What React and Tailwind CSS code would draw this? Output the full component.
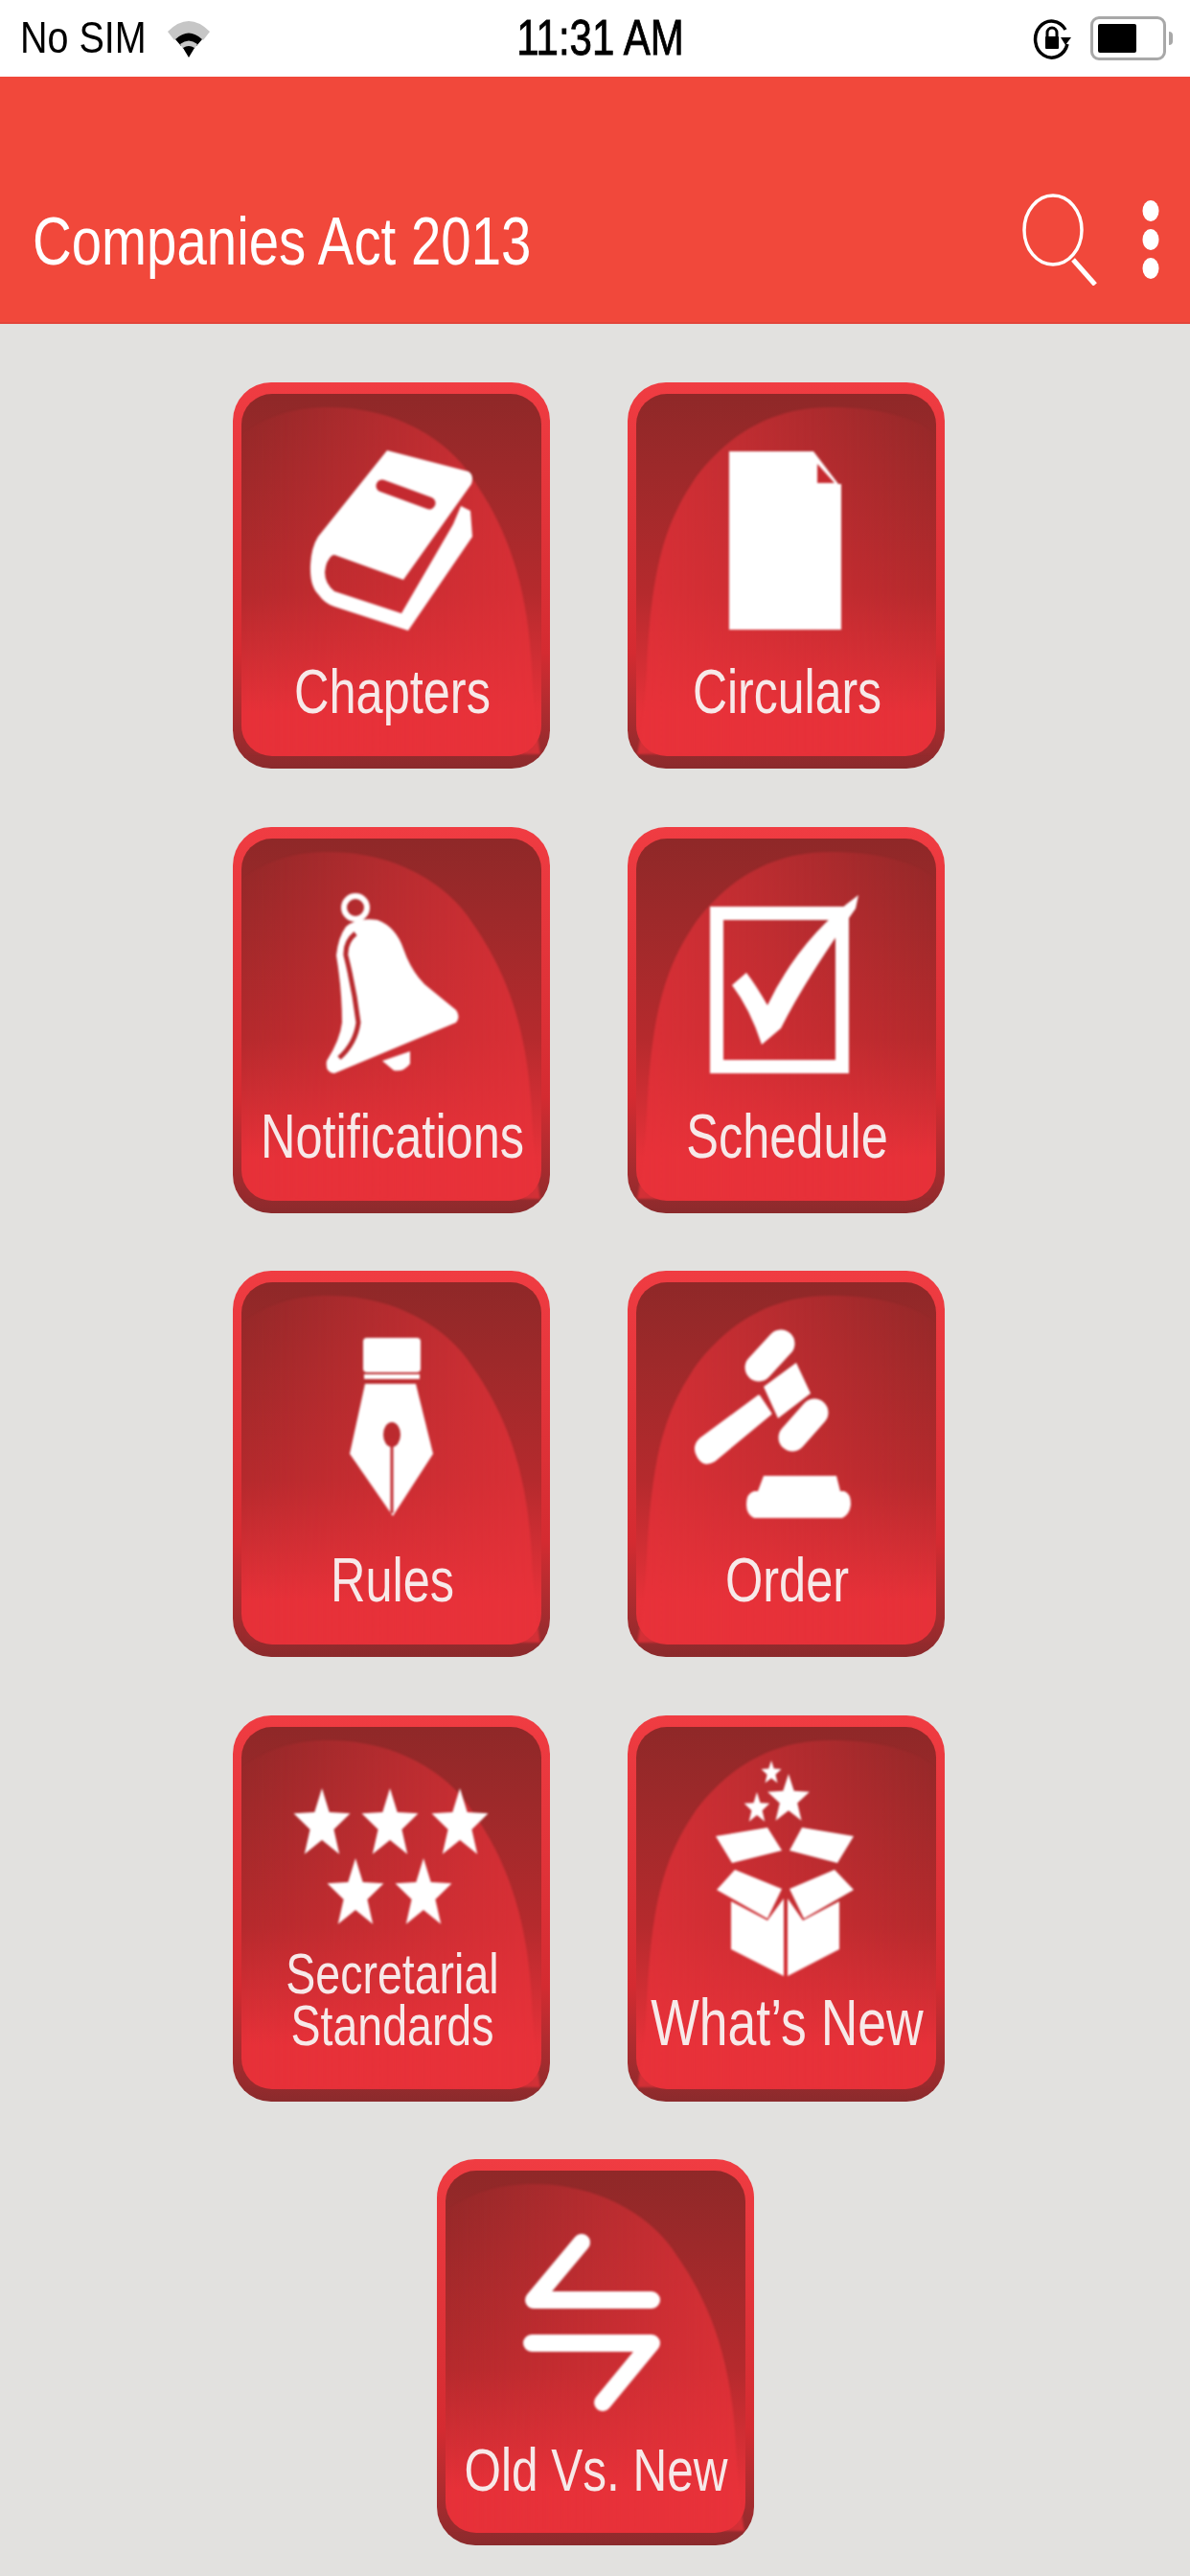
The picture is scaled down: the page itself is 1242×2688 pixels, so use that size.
import React from 'react';

const sans = { fontFamily: '"Liberation Sans", Arial, sans-serif' };

// five point star, stretched a bit taller than wide like the rest of the art
const starPoints = (cx, cy, rx, ry) => {
  const pts = [];
  for (let i = 0; i < 10; i++) {
    const a = -Math.PI / 2 + (i * Math.PI) / 5;
    const k = i % 2 === 0 ? 1 : 0.42;
    pts.push(`${(cx + Math.cos(a) * rx * k).toFixed(1)},${(cy + Math.sin(a) * ry * k).toFixed(1)}`);
  }
  return pts.join(' ');
};

const BookIcon = () => (
  <g fill="#fff">
    <path d="M161 71 L246 93 Q252 97 249 106 L178 206 L106 180 L92 183 L81 190 Q82 172 89 161 Z" />
    <path d="M81 190 Q80 212 89 221 Q96 231 106 234 L183 259 L250 161 L248 134 L238 129 L230 148 L176 241 L106 218 Q96 210 96 198 Q97 186 104 180 L92 176 Z" />
    <path d="M156 108 L205 126" stroke="#c42a30" strokeWidth="13" strokeLinecap="round" />
  </g>
);

const DocIcon = () => (
  <g>
    <path d="M106 72 H194 V106 H223 V258 H106 Z" fill="#fff" />
    <path d="M194 72 L223 110 H194 Z" fill="#fff" />
    <path d="M198 85 L216 105 H198 Z" fill="#c62a30" />
  </g>
);

const BellIcon = () => (
  <g>
    <ellipse cx="128" cy="84" rx="12" ry="12" fill="none" stroke="#fff" strokeWidth="6" />
    <path d="M118 104 Q130 94 151 97 Q170 104 178 127 Q186 150 200 164 L233 191 Q238 198 233 204 L106 257 Q96 256 98 244 Q112 222 114 204 Q114 170 108 134 Q110 115 118 104 Z" fill="#fff" />
    <path d="M128 111 Q117 120 118 134 Q127 170 131 204 Q128 226 111 241" fill="none" stroke="#b82a2e" strokeWidth="5" />
    <path d="M156 244 L185 234 L185 247 Q178 256 168 254 Z" fill="#fff" />
  </g>
);

const CheckIcon = () => (
  <g>
    <rect x="93" y="90" width="131" height="160" fill="none" stroke="#fff" strokeWidth="14" />
    <path d="M109 165 L124 152 Q134 165 146 186 Q180 115 241 71 L238 85 Q185 160 160 210 L140 227 Q128 190 109 165 Z" fill="#fff" />
  </g>
);

const PenIcon = () => (
  <g fill="#fff">
    <rect x="136" y="70" width="60" height="36" rx="4" />
    <rect x="137" y="108" width="58" height="5" />
    <path d="M138 118 H191 L209 191 L167 256 L122 191 Z" />
    <ellipse cx="166" cy="171" rx="9" ry="13" fill="#bb2a2e" />
    <rect x="164.5" y="175" width="3" height="78" fill="#c12a2f" />
  </g>
);

const GavelIcon = () => (
  <g fill="#fff">
    <path d="M160 76 L137 101" stroke="#fff" strokeWidth="29" strokeLinecap="round" />
    <path d="M195 148 L172 174" stroke="#fff" strokeWidth="29" strokeLinecap="round" />
    <path d="M176 96 L191 128 L157 154 L142 121 Z" />
    <path d="M137 131 L149 149 L90 198 Q80 204 74 194 Q68 184 76 176 Z" stroke="#fff" strokeWidth="3" strokeLinejoin="round" />
    <path d="M142 214 H218 L222 230 H226 Q233 232 233 244 Q232 254 224 258 H132 Q124 254 124 244 Q124 232 132 230 H136 Z" />
  </g>
);

const StarsIcon = () => (
  <g fill="#fff">
    <polygon points={starPoints(93, 114, 31, 38)} />
    <polygon points={starPoints(164, 114, 31, 38)} />
    <polygon points={starPoints(237, 114, 31, 38)} />
    <polygon points={starPoints(128, 187, 31, 38)} />
    <polygon points={starPoints(199, 187, 31, 38)} />
  </g>
);

const BoxIcon = () => (
  <g fill="#fff">
    <polygon points={starPoints(150, 60, 11, 13)} />
    <polygon points={starPoints(168, 88, 23, 27)} />
    <polygon points={starPoints(135, 97, 14, 17)} />
    <polygon points="92,126 146,117 161,141 109,154" />
    <polygon points="236,126 182,117 169,141 219,154" />
    <polygon points="112,161 161,181 146,212 93,182" />
    <polygon points="216,161 169,181 184,212 236,182" />
    <polygon points="108,194 146,214 163,191 163,272 108,244" />
    <polygon points="221,194 183,214 167,191 167,272 221,244" />
  </g>
);

const SwapIcon = () => (
  <g fill="none" stroke="#fff" strokeWidth="18" strokeLinecap="round" strokeLinejoin="round">
    <path d="M151 87 L101 147 H224" />
    <path d="M99 192 H224 L173 254" />
  </g>
);

// the red button art: dark panel, curved gloss, then the white glyph
const Tile = ({ icon, label, flip, labelClass = 'text-[50.5px] leading-[1.1]', pb = 'pb-[52px]' }) => {
  const id = flip ? 'glossR' : 'glossL';
  return (
    <div className="relative flex h-[403px] w-[331px] flex-col items-center justify-end overflow-hidden rounded-[40px] bg-gradient-to-b from-[#f03c42] via-[#d42b31] via-70% to-[#8b2a2c]">
      <div className="absolute inset-x-[9px] top-[12px] bottom-[13px] rounded-[32px] bg-gradient-to-b from-[#8f2828] via-[#b52a2d] via-55% to-[#e73139] to-[88%]" />
      <svg className="absolute inset-0 blur-[1px]" width="331" height="403" viewBox="0 0 331 403">
        <defs>
          <linearGradient id="glossL" x1="0" x2="1" y1="0" y2="0">
            <stop offset="0" stopColor="#e8323a" stopOpacity="0.02" />
            <stop offset="0.5" stopColor="#e8323a" stopOpacity="0.4" />
            <stop offset="1" stopColor="#e8323a" stopOpacity="0.75" />
          </linearGradient>
          <linearGradient id="glossR" x1="0" x2="1" y1="0" y2="0">
            <stop offset="0" stopColor="#e8323a" stopOpacity="0.75" />
            <stop offset="0.5" stopColor="#e8323a" stopOpacity="0.4" />
            <stop offset="1" stopColor="#e8323a" stopOpacity="0.02" />
          </linearGradient>
        </defs>
        {flip ? (
          <path fill={`url(#${id})`} d="M321 54 C300 36 260 26 211 26 C150 26 105 55 72 98 C40 145 25 190 20 300 C18 340 14 370 10 388 H321 Z" />
        ) : (
          <path fill={`url(#${id})`} d="M10 54 C40 32 70 26 101 26 C170 26 225 60 250 100 C285 150 308 210 312 300 C314 340 318 370 321 388 H10 Z" />
        )}
        {icon}
      </svg>
      <div className={`relative flex flex-col items-center pl-[2px] text-[#f7e9e9] ${pb} ${labelClass}`} style={sans}>
        {label.map((line) => (
          <span key={line} className="block scale-y-[1.28] whitespace-nowrap blur-[0.5px]">
            {line}
          </span>
        ))}
      </div>
    </div>
  );
};

const Row = ({ children }) => <div className="flex gap-[81px] pr-[13px]">{children}</div>;

const StatusBar = () => (
  <div className="flex h-[80px] items-center justify-between bg-white pl-[21px] pr-[18px] text-black" style={sans}>
    <div className="flex w-[220px] items-center gap-[20px]">
      <span className="scale-y-[1.18] text-[39.5px] leading-none">No SIM</span>
      <svg width="48" height="42" viewBox="0 0 46 42">
        <path d="M1 14 Q23 -8 45 14 L38 23 Q23 9 8 23 Z" fill="#c6c6c6" />
        <path d="M9 22 Q23 9 37 22 L31 29 Q23 21 15 29 Z" fill="#000" />
        <path d="M14 27 Q23 20 32 27 L29 32 Q23 28 17 32 Z" fill="#c6c6c6" />
        <path d="M17 31 Q23 27 29 31 L23 41 Z" fill="#000" />
      </svg>
    </div>
    <span className="ml-[8px] scale-y-[1.22] text-[42px] leading-none [-webkit-text-stroke:0.7px_black]">11:31 AM</span>
    <div className="flex w-[220px] items-center justify-end gap-[20px]">
      <svg width="40" height="44" viewBox="0 0 40 44">
        <path d="M34 13 A17 19 0 1 0 36 28" fill="none" stroke="#000" strokeWidth="3.5" />
        <path d="M29 21 H40 L34 29 Z" fill="#000" />
        <path d="M15 21 V16 A5 5 0 0 1 25 16 V21" fill="none" stroke="#000" strokeWidth="3" />
        <rect x="13" y="20" width="14" height="13" rx="1" fill="#000" />
      </svg>
      <div className="flex items-center gap-[3px]">
        <div className="flex h-[46px] w-[79px] items-center rounded-[9px] border-[3px] border-[#a8a8a8] pl-[5px]">
          <div className="h-[30px] w-[40px] rounded-[2px] bg-black" />
        </div>
        <div className="h-[14px] w-[4px] rounded-r-full bg-[#a8a8a8]" />
      </div>
    </div>
  </div>
);

const Header = () => (
  <div className="flex h-[258px] items-end justify-between border-b-2 border-[#e2453a] bg-[#f1483b] pb-[38px] pl-[34px] pr-[32px] text-white" style={sans}>
    <span className="mb-[18px] block scale-y-[1.26] text-[56.4px] leading-none blur-[0.3px]">Companies Act 2013</span>
    <div className="flex items-end gap-[47px]">
      <svg width="78" height="96" viewBox="0 0 78 96">
        <ellipse cx="32" cy="38" rx="30" ry="36" fill="none" stroke="#fff" strokeWidth="3.5" />
        <path d="M53 69 L76 95" stroke="#fff" strokeWidth="5" />
      </svg>
      <svg className="mb-[7px]" width="18" height="82" viewBox="0 0 18 82">
        <ellipse cx="9" cy="11" rx="8.5" ry="11" fill="#fff" />
        <ellipse cx="9" cy="41" rx="8.5" ry="11" fill="#fff" />
        <ellipse cx="9" cy="71" rx="8.5" ry="11" fill="#fff" />
      </svg>
    </div>
  </div>
);

export default function App() {
  return (
    <div className="flex h-[2688px] w-[1242px] flex-col overflow-hidden bg-[#e2e1df]">
      <StatusBar />
      <Header />
      <div className="flex flex-col items-center gap-[60.5px] pt-[61px]">
        <Row>
          <Tile icon={<BookIcon />} label={['Chapters']} />
          <Tile flip icon={<DocIcon />} label={['Circulars']} labelClass="text-[50px] leading-[1.1]" />
        </Row>
        <Row>
          <Tile icon={<BellIcon />} label={['Notifications']} />
          <Tile flip icon={<CheckIcon />} label={['Schedule']} />
        </Row>
        <Row>
          <Tile icon={<PenIcon />} label={['Rules']} />
          <Tile flip icon={<GavelIcon />} label={['Order']} />
        </Row>
        <Row>
          <Tile icon={<StarsIcon />} label={['Secretarial', 'Standards']} labelClass="text-[46.5px] leading-[1.16]" pb="pb-[51px]" />
          <Tile flip icon={<BoxIcon />} label={["What\u2019s New"]} labelClass="text-[53.5px] leading-[1.1]" />
        </Row>
        <Tile icon={<SwapIcon />} label={['Old Vs. New']} labelClass="text-[49.5px] leading-[1.1]" />
      </div>
    </div>
  );
}
